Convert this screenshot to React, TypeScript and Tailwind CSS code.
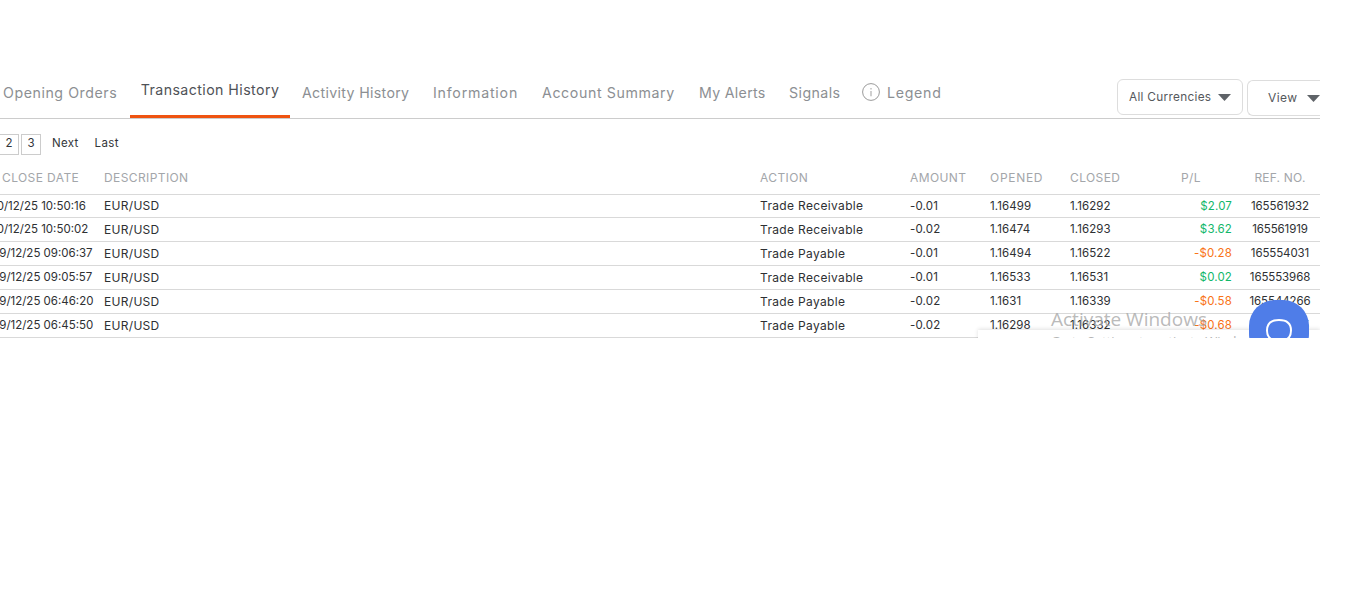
const font = { fontFamily: '"Inter", "Liberation Sans", sans-serif' };

const tabs = [
  { label: "Opening Orders", w: "w-[130px]", pl: "pl-[3px]", tr: "tracking-[0.56px]" },
  { label: "Transaction History", active: true, tr: "" },
  { label: "Activity History", w: "w-[131px]", pl: "pl-[12px]", tr: "tracking-[0.32px]" },
  { label: "Information", w: "w-[109px]", pl: "pl-[12px]", tr: "tracking-[0.78px]" },
  { label: "Account Summary", w: "w-[157px]", pl: "pl-[12px]", tr: "tracking-[0.6px]" },
  { label: "My Alerts", w: "w-[90px]", pl: "pl-[12px]", tr: "tracking-[0.3px]" },
  { label: "Signals", w: "w-[85px]", pl: "pl-[12px]", tr: "tracking-[0.42px]" },
];

type Row = [string, string, string, string, string, string, string, boolean, string];
const rows: Row[] = [
  ["10/12/25 10:50:16", "EUR/USD", "Trade Receivable", "-0.01", "1.16499", "1.16292", "$2.07", true, "165561932"],
  ["10/12/25 10:50:02", "EUR/USD", "Trade Receivable", "-0.02", "1.16474", "1.16293", "$3.62", true, "165561919"],
  ["09/12/25 09:06:37", "EUR/USD", "Trade Payable", "-0.01", "1.16494", "1.16522", "-$0.28", false, "165554031"],
  ["09/12/25 09:05:57", "EUR/USD", "Trade Receivable", "-0.01", "1.16533", "1.16531", "$0.02", true, "165553968"],
  ["09/12/25 06:46:20", "EUR/USD", "Trade Payable", "-0.02", "1.1631", "1.16339", "-$0.58", false, "165544266"],
  ["09/12/25 06:45:50", "EUR/USD", "Trade Payable", "-0.02", "1.16298", "1.16332", "-$0.68", false, "165544125"],
];

const cols = "grid grid-cols-[112px_656px_150px_80px_80px_80px_82px_88px]";

function Caret() {
  return (
    <svg width="13" height="7" viewBox="0 0 13 7" className="shrink-0">
      <path d="M0 0H13L6.5 7Z" fill="#5f6368" />
    </svg>
  );
}

export default function App() {
  return (
    <div className="h-[597px] w-[1348px] bg-white overflow-hidden" style={font}>
      <div className="relative w-[1320px] h-[338px] overflow-hidden pt-[72px]">
        <div className="flex items-end h-[47px] border-b border-[#cccccc]">
          {tabs.map((t) =>
            t.active ? (
              <div
                key={t.label}
                className="w-[160px] h-[46px] border-b-[3px] border-[#ef5310] text-center text-[#4f5257] text-[14.2px] tracking-[0.42px] pt-[7px] shrink-0"
              >
                {t.label}
              </div>
            ) : (
              <div
                key={t.label}
                className={`${t.w} ${t.pl} ${t.tr} h-[46px] text-[#8c8f93] text-[14.2px] pt-[10px] whitespace-nowrap shrink-0`}
              >
                {t.label}
              </div>
            )
          )}
          <div className="h-[46px] flex items-start pt-[10px] gap-[7px] text-[#8c8f93] text-[14.2px] tracking-[0.7px] shrink-0">
            <svg width="18" height="18" viewBox="0 0 18 18" className="mt-[1px]">
              <circle cx="9" cy="9" r="8.4" fill="none" stroke="#9a9a9a" strokeWidth="1" />
              <path d="M9 8v5.2M9 5v1.4" stroke="#b0b0b0" strokeWidth="1.2" />
            </svg>
            Legend
          </div>
          <div className="ml-auto flex gap-[4px] h-[46px] items-start pt-[7px]">
            <div className="w-[126px] h-[36px] pt-[1px] rounded-[6px] border border-[#dddddd] flex items-center justify-between pl-[11px] pr-[11px] text-[11.8px] tracking-[0.3px] text-[#55585c]">
              All Currencies
              <Caret />
            </div>
            <div className="w-[73px] h-[36px] mt-[1px] rounded-l-[6px] border border-r-0 border-[#dddddd] flex items-center justify-between pl-[20px] text-[12px] tracking-[0.4px] text-[#55585c]">
              View
              <Caret />
            </div>
          </div>
        </div>

        <div className="flex items-center h-[49px] pt-[1px] text-[11.5px] text-[#33363a]">
          <div className="w-[20px] h-[21px] -ml-[1px] border border-[#cccccc] flex items-center justify-center">2</div>
          <div className="w-[20px] h-[21px] border border-[#cccccc] flex items-center justify-center ml-[2px]">3</div>
          <span className="ml-[11px] tracking-[0.3px]">Next</span>
          <span className="ml-[16px] tracking-[0.4px]">Last</span>
        </div>

        <div className={`${cols} h-[27px] items-center pb-[6px] border-b border-[#d9d9d9] text-[12px] tracking-[0.4px] text-[#a3a6aa] -ml-[8px] w-[1328px]`}>
          <div className="pl-[10px]">CLOSE DATE</div>
          <div>DESCRIPTION</div>
          <div>ACTION</div>
          <div>AMOUNT</div>
          <div className="tracking-[0.7px]">OPENED</div>
          <div>CLOSED</div>
          <div className="text-right pr-[31px]">P/L</div>
          <div className="text-center pl-[8px] tracking-[0.2px]">REF. NO.</div>
        </div>

        {rows.map((r, i) => (
          <div
            key={r[0]}
            className={`${cols} ${i === 0 ? "h-[23px]" : "h-[24px]"} pt-[1px] items-center border-b border-[#d9d9d9] text-[11.5px] text-[#2e3033] -ml-[8px] w-[1328px] whitespace-nowrap`}
          >
            <div>{r[0]}</div>
            <div className={`text-[12px] tracking-[0.3px] ${i === 0 ? "mb-[1px]" : ""}`}>{r[1]}</div>
            <div className={`text-[12px] tracking-[0.34px] ${i === 0 ? "mb-[1px]" : ""}`}>{r[2]}</div>
            <div className="tracking-[0.15px]">{r[3]}</div>
            <div className="tracking-[0.1px]">{r[4]}</div>
            <div className="tracking-[0.1px]">{r[5]}</div>
            <div className={`text-right tracking-[0.15px] ${r[7] ? "text-[#12b76a]" : "text-[#f97316]"}`}>{r[6]}</div>
            <div className="text-center pl-[8px] tracking-[-0.1px]">{r[8]}</div>
          </div>
        ))}

        <div className="absolute left-[978px] top-[330px] w-[342px] h-[40px] bg-white shadow-[0_-1px_4px_rgba(0,0,0,0.12)]" />
        <div
          className="absolute left-[1051px] top-[306px] text-[19px] leading-[26px] text-[#a8a8a8]/80 whitespace-nowrap"
          style={{ fontFamily: '"Open Sans", sans-serif' }}
        >
          Activate Windows
        </div>
        <div
          className="absolute left-[1051px] top-[332px] text-[13px] leading-[18px] text-[#b5b5b5] whitespace-nowrap"
          style={{ fontFamily: '"Open Sans", sans-serif' }}
        >
          Go to Settings to activate Windows.
        </div>
        <div className="absolute left-[1249px] top-[300px] w-[60px] h-[60px] rounded-[26px] bg-[#4f7de8] flex justify-center pt-[18px]">
          <svg width="30" height="30" viewBox="0 0 30 30" fill="none" stroke="#ffffff" strokeWidth="2">
            <path d="M15 2c8 0 12 3 12 10.500S23 23 15 23c-1 0-2-.1-3-.2L8 27v-5.500C4.500 19.800 3 17 3 12.500 3 5 7 2 15 2Z" />
          </svg>
        </div>
      </div>
    </div>
  );
}
